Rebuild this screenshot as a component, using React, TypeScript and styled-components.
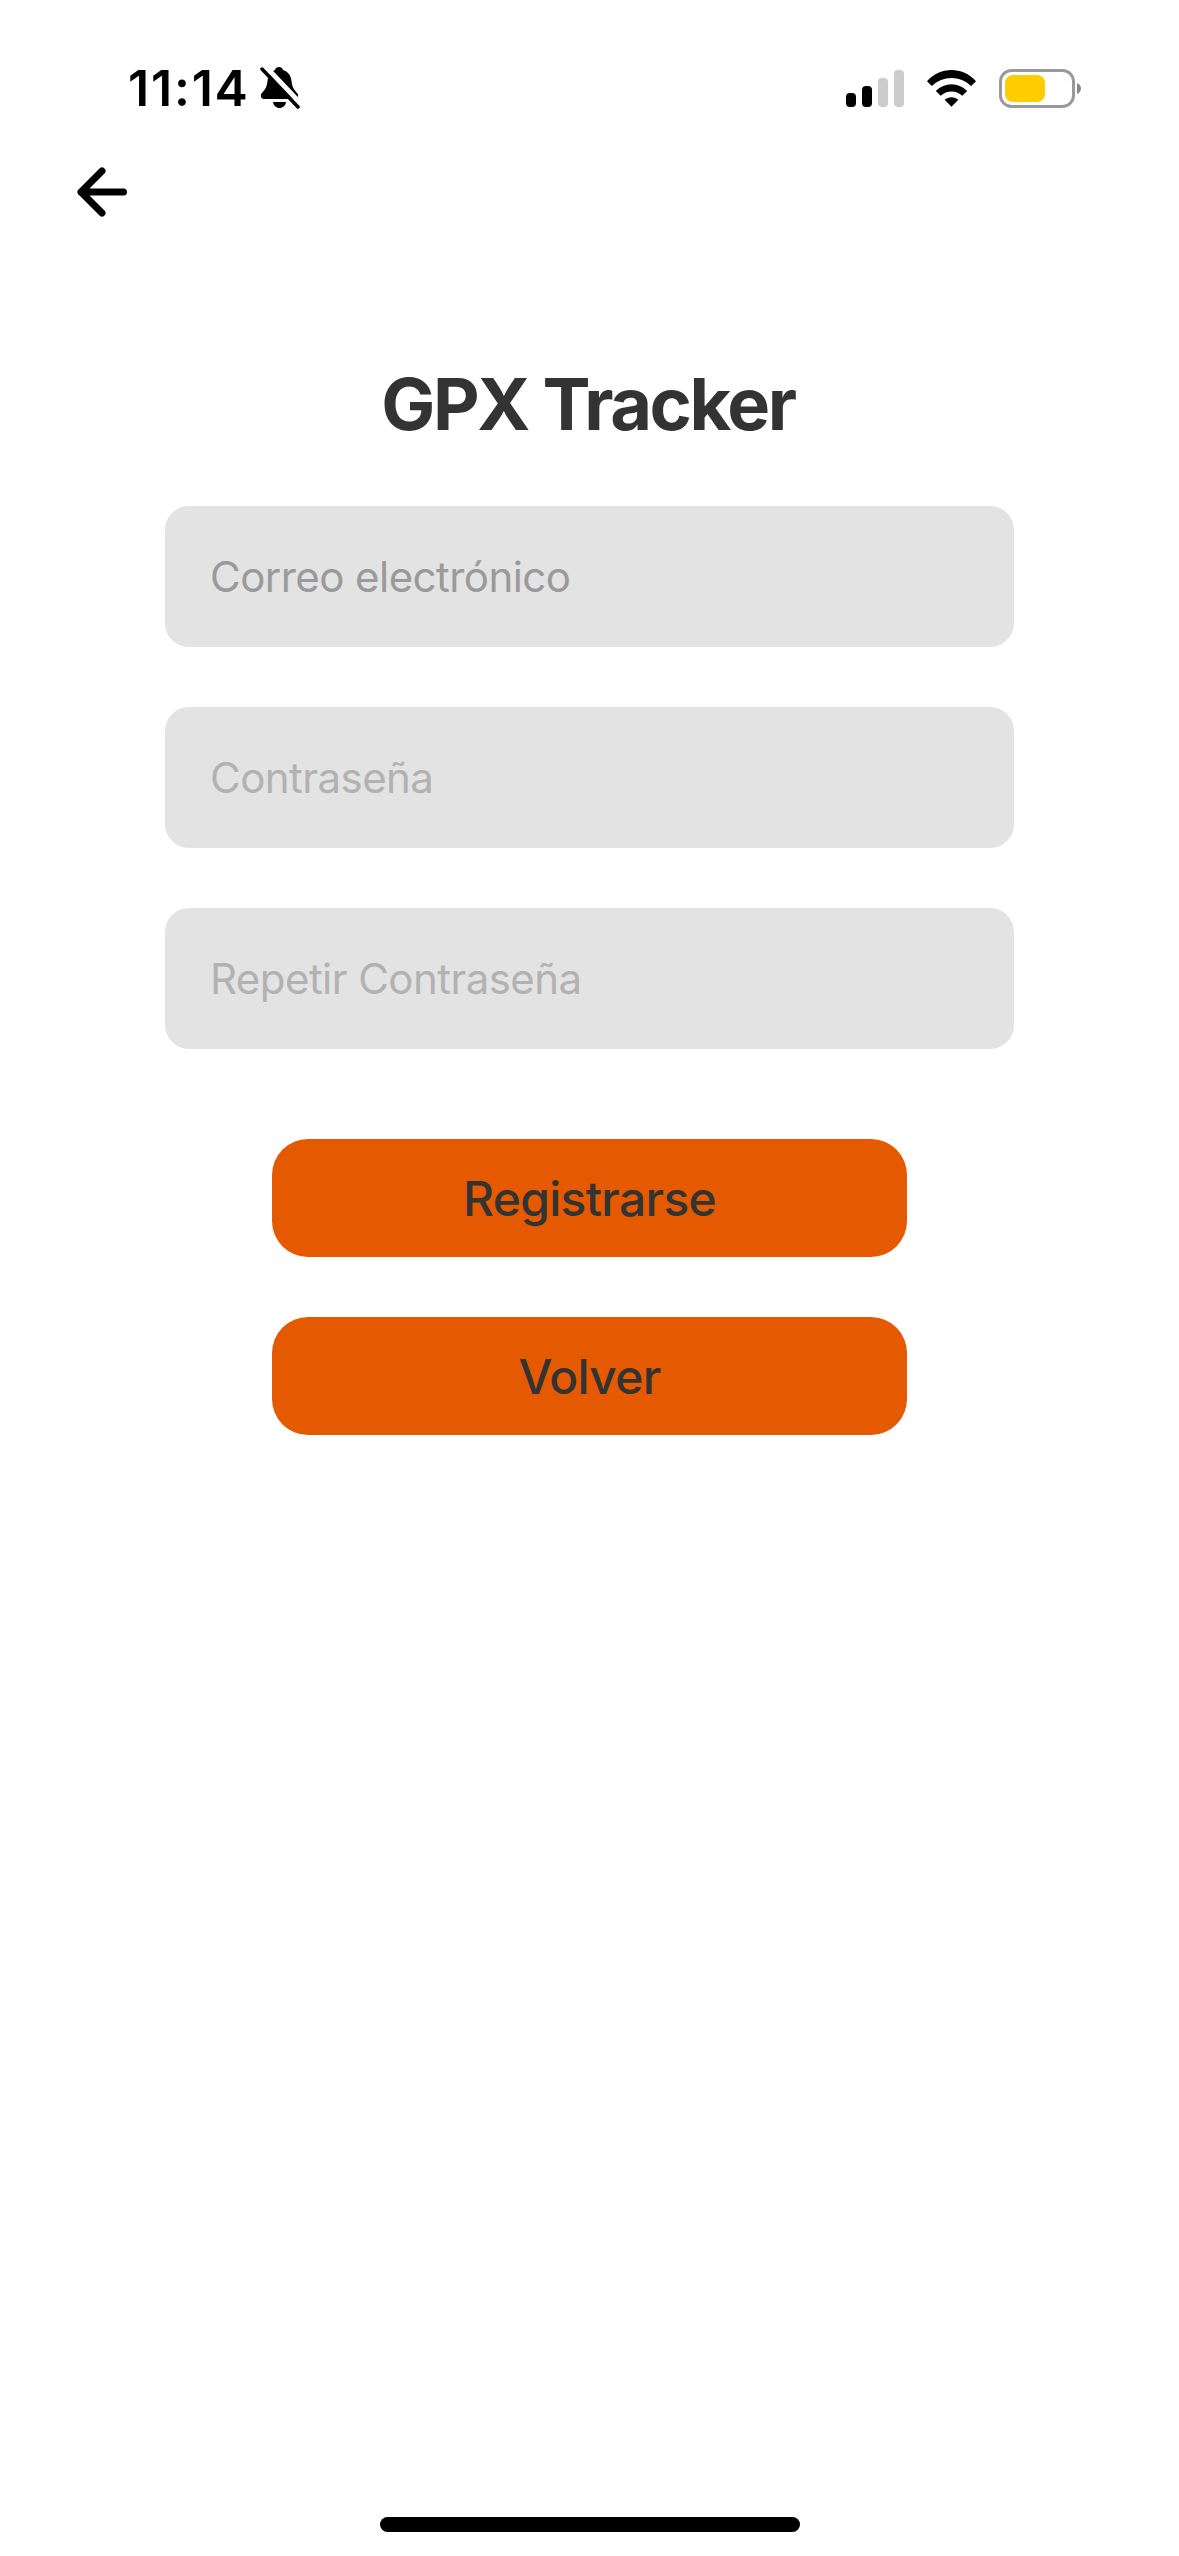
import React from 'react'
import styled, { createGlobalStyle } from 'styled-components'

const GlobalStyle = createGlobalStyle`
	html, body {
		margin: 0;
		padding: 0;
		background: #ffffff;
	}
	input::placeholder {
		color: #b2b2b2;
		opacity: 1;
	}
	input.filled::placeholder {
		color: #9a9a9a;
	}
`

const Screen = styled.div`
	width: 1179px;
	height: 2556px;
	background: #ffffff;
	display: flex;
	flex-direction: column;
	font-family: Inter, 'Liberation Sans', sans-serif;
	overflow: hidden;
`

const StatusBar = styled.div`
	height: 60px;
	margin-top: 58px;
	padding: 0 98px 0 128px;
	display: flex;
	align-items: center;
	justify-content: space-between;
`

const TimeGroup = styled.div`
	display: flex;
	align-items: center;
	gap: 10px;
`

const Time = styled.span`
	font-size: 50px;
	font-weight: 600;
	line-height: 60px;
	letter-spacing: 1.8px;
	color: #000000;
`

const StatusIcons = styled.div`
	display: flex;
	align-items: center;
	gap: 22px;
`

const NavBar = styled.div`
	height: 120px;
	padding: 48px 0 0 74px;
	box-sizing: border-box;
	display: flex;
	align-items: flex-start;
`

const Main = styled.div`
	display: flex;
	flex-direction: column;
	align-items: center;
`

const Title = styled.h1`
	margin: 122px 3px 58px 0;
	font-size: 72px;
	line-height: 88px;
	font-weight: 700;
	letter-spacing: -2.4px;
	color: #333333;
`

const Fields = styled.div`
	width: 849px;
	display: flex;
	flex-direction: column;
	gap: 60px;
`

const Field = styled.input`
	box-sizing: border-box;
	width: 100%;
	height: 141px;
	padding: 0 45px;
	border: none;
	border-radius: 24px;
	outline: none;
	background: #e3e3e3;
	font-family: inherit;
	font-size: 42px;
	letter-spacing: -0.55px;
`

const Actions = styled.div`
	width: 635px;
	margin-top: 90px;
	display: flex;
	flex-direction: column;
	gap: 60px;
`

const ActionButton = styled.button`
	height: 118px;
	border: none;
	border-radius: 36px;
	background: #e55a00;
	color: #333333;
	font-family: inherit;
	font-size: 48px;
	font-weight: 500;
	letter-spacing: -0.7px;
`

const HomeIndicator = styled.div`
	width: 420px;
	height: 15px;
	margin: auto 0 24px;
	align-self: center;
	border-radius: 8px;
	background: #000000;
`

function App() {
	return (
		<Screen>
			<GlobalStyle />
			<StatusBar>
				<TimeGroup>
					<Time>11:14</Time>
					<svg width='40' height='44' viewBox='0 0 40 44'>
						<path d='M19 1c2 0 3.500 1.200 4 3 5 1.500 8 5.500 8.500 11 .4 5 2 8.500 6 12.500 1.500 2 .5 5.500-2.500 5.500H4c-3 0-4-3.500-2.500-5.500 4-4 5.600-7.500 6-12.500C8 9.500 11 5.500 15 4c.5-1.800 2-3 4-3z' fill='#000' />
						<path d='M13 36h13c-.5 3.500-3 6-6.500 6S13.500 39.500 13 36z' fill='#000' />
						<path d='M5 0l36 38' stroke='#fff' strokeWidth='5' />
						<path d='M2 3l36 38' stroke='#000' strokeWidth='3.500' strokeLinecap='round' />
					</svg>
				</TimeGroup>
				<StatusIcons>
					<svg width='58' height='37' viewBox='0 0 58 37'>
						<rect x='0' y='23' width='10' height='14' rx='4' fill='#000' />
						<rect x='16' y='16' width='10' height='21' rx='4' fill='#000' />
						<rect x='32' y='8' width='10' height='29' rx='4' fill='#cccccc' />
						<rect x='48' y='0' width='10' height='37' rx='4' fill='#cccccc' />
					</svg>
					<svg width='51' height='38' viewBox='0 0 52 38'>
						<path d='M1 12C15 -3 37 -3 51 12l-5 5C35 6 17 6 6 17z' fill='#000' />
						<path d='M10 22c9-9 23-9 32 0l-5 5c-6-6-16-6-22 0z' fill='#000' />
						<path d='M19 31c4-3.500 10-3.500 14 0l-7 7z' fill='#000' />
					</svg>
					<svg width='82' height='39' viewBox='0 0 82 39'>
						<rect x='1.500' y='1.500' width='73' height='36' rx='11' fill='none' stroke='#999999' strokeWidth='3' />
						<rect x='6' y='6' width='40' height='27' rx='8' fill='#ffcc00' />
						<path d='M78 14c2.500 1 4 3 4 5.500s-1.500 4.500-4 5.500z' fill='#888888' />
					</svg>
				</StatusIcons>
			</StatusBar>
			<NavBar>
				<svg width='54' height='52' viewBox='0 0 54 52'>
					<path d='M49.500 26H7M28 5L7 26l21 21' fill='none' stroke='#000' strokeWidth='7' strokeLinecap='round' strokeLinejoin='round' />
				</svg>
			</NavBar>
			<Main>
				<Title>GPX Tracker</Title>
				<Fields>
					<Field className='filled' placeholder='Correo electrónico' />
					<Field placeholder='Contraseña' />
					<Field placeholder='Repetir Contraseña' />
				</Fields>
				<Actions>
					<ActionButton>Registrarse</ActionButton>
					<ActionButton>Volver</ActionButton>
				</Actions>
			</Main>
			<HomeIndicator />
		</Screen>
	)
}

export default App
